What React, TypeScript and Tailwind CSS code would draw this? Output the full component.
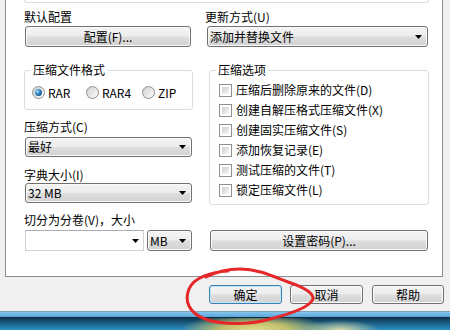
import React from "react";

const btnGrad =
  "bg-[linear-gradient(#f4f4f4_0%,#ececec_48%,#dedede_52%,#d2d2d2_100%)]";

function Arrow() {
  return (
    <svg width="7" height="4" viewBox="0 0 7 4" className="shrink-0">
      <path d="M0 0H7L3.5 4Z" fill="#000" />
    </svg>
  );
}

function Btn({
  children,
  className = "",
  def = false,
}: {
  children: React.ReactNode;
  className?: string;
  def?: boolean;
}) {
  return (
    <div
      className={`flex items-center justify-center rounded-[3px] border ${
        def
          ? "border-[#3c7fb1] shadow-[inset_0_0_0_1px_#bfe6fa]"
          : "border-[#707070] shadow-[inset_0_0_0_1px_#fbfbfb]"
      } ${btnGrad} leading-[14px] ${className}`}
    >
      {children}
    </div>
  );
}

function Combo({ text, className = "" }: { text: string; className?: string }) {
  return (
    <div
      className={`flex items-center justify-between rounded-[3px] border border-[#707070] shadow-[inset_0_0_0_1px_#fbfbfb] ${btnGrad} pl-[2px] pr-[5px] leading-[14px] ${className}`}
    >
      <span>{text}</span>
      <Arrow />
    </div>
  );
}

function Group({
  title,
  className = "",
  children,
}: {
  title: string;
  className?: string;
  children: React.ReactNode;
}) {
  return (
    <div className={`relative rounded-[3px] border border-[#d5dfe5] ${className}`}>
      <span className="absolute left-[6px] top-[-8px] bg-white px-[2px] leading-[14px]">
        {title}
      </span>
      {children}
    </div>
  );
}

function Radio({
  label,
  checked = false,
  className = "",
}: {
  label: string;
  checked?: boolean;
  className?: string;
}) {
  return (
    <div className={`flex h-[13px] items-center ${className}`}>
      <div className="flex h-[13px] w-[13px] items-center justify-center rounded-full border border-[#8e8f8f] bg-[linear-gradient(135deg,#cfcfcf,#fdfdfd)]">
        {checked && (
          <div className="h-[7px] w-[7px] rounded-full bg-[radial-gradient(circle_at_35%_35%,#a8def9,#2a7ec2_45%,#0c3c6c)]" />
        )}
      </div>
      <span className="ml-[3px] leading-[14px]">{label}</span>
    </div>
  );
}

function Check({ label }: { label: string }) {
  return (
    <div className="flex h-[20px] items-center">
      <div className="h-[13px] w-[13px] border border-[#8e8f8f] bg-white p-[2px]">
        <div className="h-full w-full bg-[linear-gradient(135deg,#cbcfd5,#f6f6f6)]" />
      </div>
      <span className="ml-[4px] leading-[14px]">{label}</span>
    </div>
  );
}

export default function App() {
  return (
    <div className="relative h-[330px] w-[450px] overflow-hidden bg-[#f0f0f0] font-['Noto_Sans_CJK_SC','Liberation_Sans',sans-serif] text-[12px] leading-[14px] text-black">
      {/* tab page */}
      <div className="ml-[5px] h-[277px] w-[438px] border-x border-b border-[#898c95] bg-white">
        <div className="ml-[18px] h-[3px] w-[405px] rounded-b-[3px] border-x border-b border-[#d5dfe5]" />
        <div className="flex pl-[18px]">
          {/* left column */}
          <div className="flex w-[169px] flex-col">
            <div className="mt-[7px] h-[14px]">默认配置</div>
            <Btn className="ml-[1px] mt-[2px] h-[21px] w-[166px]">配置(F)...</Btn>
            <Group title="压缩文件格式" className="mt-[23px] h-[40px] w-[169px]">
              <div className="flex pl-[7px] pt-[15px]">
                <Radio label="RAR" checked className="w-[54px]" />
                <Radio label="RAR4" className="w-[56px]" />
                <Radio label="ZIP" />
              </div>
            </Group>
            <div className="mt-[10px] h-[14px]">压缩方式(C)</div>
            <Combo text="最好" className="ml-[1px] mt-[3px] h-[20px] w-[167px]" />
            <div className="mt-[11px] h-[14px]">字典大小(I)</div>
            <Combo text="32 MB" className="ml-[1px] mt-[1px] h-[20px] w-[167px]" />
            <div className="mt-[10px] h-[14px]">切分为分卷(V)，大小</div>
            <div className="mt-[3px] flex h-[21px]">
              <div className="ml-[1px] flex h-[21px] w-[119px] items-center justify-end border border-[#cfd2d6] border-t-[#abadb3] bg-white pr-[4px]">
                <Arrow />
              </div>
              <Combo text="MB" className="ml-[3px] h-[21px] w-[45px]" />
            </div>
          </div>
          {/* right column */}
          <div className="ml-[14px] flex w-[222px] flex-col">
            <div className="-ml-[2px] mt-[7px] h-[14px]">更新方式(U)</div>
            <Combo text="添加并替换文件" className="mt-[2px] h-[21px] w-[221px]" />
            <Group title="压缩选项" className="ml-[2px] mt-[23px] h-[135px] w-[220px]">
              <div className="flex flex-col pl-[9px] pt-[9px]">
                <Check label="压缩后删除原来的文件(D)" />
                <Check label="创建自解压格式压缩文件(X)" />
                <Check label="创建固实压缩文件(S)" />
                <Check label="添加恢复记录(E)" />
                <Check label="测试压缩的文件(T)" />
                <Check label="锁定压缩文件(L)" />
              </div>
            </Group>
            <Btn className="ml-[3px] mt-[25px] h-[21px] w-[218px]">设置密码(P)...</Btn>
          </div>
        </div>
      </div>

      {/* dialog buttons */}
      <div className="flex h-[34px] items-start pt-[8px]">
        <Btn def className="ml-[209px] h-[19px] w-[73px]">确定</Btn>
        <Btn className="ml-[8px] h-[19px] w-[73px]">取消</Btn>
        <Btn className="ml-[9px] h-[19px] w-[72px]">帮助</Btn>
      </div>

      {/* window frame / taskbar */}
      <div className="h-[1px] bg-[#7d9fb8]" />
      <div className="h-[5px] bg-[linear-gradient(#84c4ec,#5ba6da)]" />
      <div className="h-[1px] bg-[#0e2c40]" />
      <div className="h-[12px] bg-[radial-gradient(ellipse_75px_16px_at_255px_100%,#e2dc90_0%,#c2bf6a_45%,rgba(150,170,90,0)_100%),radial-gradient(ellipse_40px_10px_at_340px_100%,#d8d8a0_0%,rgba(200,200,150,0)_100%),linear-gradient(#0d3852,#2a8ec4)]" />

      {/* red hand-drawn circle */}
      <svg
        className="pointer-events-none absolute left-0 top-0"
        width="450"
        height="330"
        viewBox="0 0 450 330"
      >
        <path
          d="M228 271 C212 272 194 277 189 289 C184 301 189 313 205 319 C222 325 250 325 270 319 C290 314 310 307 313 299 C314 292 300 286 288 282 C272 276 258 269 240 269 C228 269 216 272 206 277"
          fill="none"
          stroke="#e4282a"
          strokeWidth="3"
          strokeLinecap="round"
        />
      </svg>
    </div>
  );
}
